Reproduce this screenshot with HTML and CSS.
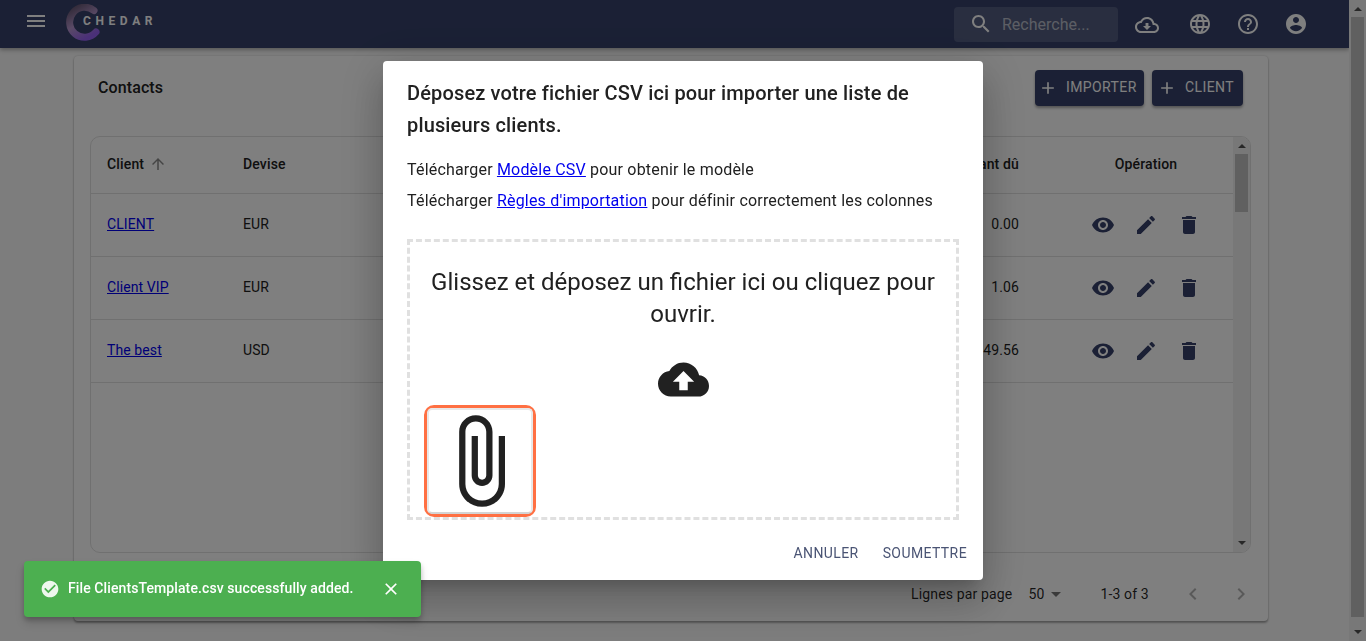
FILE: index.html
```html
<!DOCTYPE html>
<html lang="fr">
<head>
    <meta charset="UTF-8">
    <meta name="viewport" content="width=device-width, initial-scale=1.0">
    <title>Contacts - Chedar</title>
    <link rel="stylesheet" href="styles.css">
</head>
<body>
    <!-- icones material -->
    <svg class="sprites" xmlns="http://www.w3.org/2000/svg">
        <symbol id="i-menu" viewBox="0 0 24 24"><path d="M3 18h18v-2H3v2zm0-5h18v-2H3v2zm0-7v2h18V6H3z"/></symbol>
        <symbol id="i-search" viewBox="0 0 24 24"><path d="M15.5 14h-.79l-.28-.27C15.41 12.59 16 11.11 16 9.5 16 5.91 13.09 3 9.5 3S3 5.91 3 9.5 5.91 16 9.5 16c1.61 0 3.09-.59 4.23-1.57l.27.28v.79l5 4.99L20.49 19l-4.99-5zm-6 0C7.01 14 5 11.99 5 9.5S7.01 5 9.5 5 14 7.01 14 9.5 11.99 14 9.5 14z"/></symbol>
        <symbol id="i-cloud-down" viewBox="0 0 24 24"><path d="M19.35 10.04C18.67 6.59 15.64 4 12 4 9.11 4 6.6 5.64 5.35 8.04 2.34 8.36 0 10.91 0 14c0 3.31 2.69 6 6 6h13c2.76 0 5-2.24 5-5 0-2.64-2.05-4.78-4.65-4.96zM19 18H6c-2.21 0-4-1.79-4-4 0-2.05 1.53-3.76 3.56-3.97l1.07-.11.5-.95C8.08 7.14 9.94 6 12 6c2.62 0 4.88 1.86 5.39 4.43l.3 1.5 1.53.11c1.56.1 2.78 1.41 2.78 2.96 0 1.65-1.35 3-3 3zm-5.55-8h-2.9v3H8l4 4 4-4h-2.55z"/></symbol>
        <symbol id="i-language" viewBox="0 0 24 24"><path d="M11.99 2C6.47 2 2 6.48 2 12s4.47 10 9.99 10C17.52 22 22 17.52 22 12S17.52 2 11.99 2zm6.93 6h-2.95c-.32-1.25-.78-2.45-1.38-3.56 1.84.63 3.37 1.91 4.33 3.56zM12 4.04c.83 1.2 1.48 2.53 1.91 3.96h-3.82c.43-1.43 1.08-2.76 1.91-3.96zM4.26 14C4.1 13.36 4 12.69 4 12s.1-1.36.26-2h3.38c-.08.66-.14 1.32-.14 2 0 .68.06 1.34.14 2H4.26zm.82 2h2.95c.32 1.25.78 2.45 1.38 3.56-1.84-.63-3.37-1.9-4.33-3.56zm2.95-8H5.08c.96-1.66 2.49-2.93 4.33-3.56C8.81 5.55 8.35 6.75 8.03 8zM12 19.96c-.83-1.2-1.48-2.53-1.91-3.96h3.82c-.43 1.43-1.08 2.76-1.91 3.96zM14.34 14H9.66c-.09-.66-.16-1.32-.16-2 0-.68.07-1.35.16-2h4.68c.09.65.16 1.32.16 2 0 .68-.07 1.34-.16 2zm.25 5.56c.6-1.11 1.06-2.31 1.38-3.56h2.95c-.96 1.65-2.49 2.93-4.33 3.56zM16.36 14c.08-.66.14-1.32.14-2 0-.68-.06-1.34-.14-2h3.38c.16.64.26 1.31.26 2s-.1 1.36-.26 2h-3.38z"/></symbol>
        <symbol id="i-help" viewBox="0 0 24 24"><path d="M11 18h2v-2h-2v2zm1-16C6.48 2 2 6.48 2 12s4.48 10 10 10 10-4.48 10-10S17.52 2 12 2zm0 18c-4.41 0-8-3.59-8-8s3.59-8 8-8 8 3.59 8 8-3.59 8-8 8zm0-14c-2.21 0-4 1.79-4 4h2c0-1.1.9-2 2-2s2 .9 2 2c0 2-3 1.75-3 5h2c0-2.25 3-2.5 3-5 0-2.21-1.79-4-4-4z"/></symbol>
        <symbol id="i-account" viewBox="0 0 24 24"><path d="M12 2C6.48 2 2 6.48 2 12s4.48 10 10 10 10-4.48 10-10S17.52 2 12 2zm0 3c1.66 0 3 1.34 3 3s-1.34 3-3 3-3-1.34-3-3 1.34-3 3-3zm0 14.2c-2.5 0-4.71-1.28-6-3.22.03-1.99 4-3.08 6-3.08 1.99 0 5.97 1.09 6 3.08-1.29 1.94-3.5 3.22-6 3.22z"/></symbol>
        <symbol id="i-add" viewBox="0 0 24 24"><path d="M19 13h-6v6h-2v-6H5v-2h6V5h2v6h6v2z"/></symbol>
        <symbol id="i-up" viewBox="0 0 24 24"><path d="M4 12l1.41 1.41L11 7.83V20h2V7.83l5.58 5.59L20 12l-8-8-8 8z"/></symbol>
        <symbol id="i-eye" viewBox="0 0 24 24"><path d="M12 4.5C7 4.5 2.73 7.61 1 12c1.73 4.39 6 7.5 11 7.5s9.27-3.11 11-7.5c-1.73-4.39-6-7.5-11-7.5zM12 17c-2.76 0-5-2.24-5-5s2.24-5 5-5 5 2.24 5 5-2.24 5-5 5zm0-8c-1.66 0-3 1.34-3 3s1.34 3 3 3 3-1.34 3-3-1.34-3-3-3z"/></symbol>
        <symbol id="i-edit" viewBox="0 0 24 24"><path d="M3 17.25V21h3.75L17.81 9.94l-3.75-3.75L3 17.25zM20.71 7.04c.39-.39.39-1.02 0-1.41l-2.34-2.34c-.39-.39-1.02-.39-1.41 0l-1.83 1.83 3.75 3.75 1.83-1.83z"/></symbol>
        <symbol id="i-delete" viewBox="0 0 24 24"><path d="M6 19c0 1.1.9 2 2 2h8c1.1 0 2-.9 2-2V7H6v12zM19 4h-3.5l-1-1h-5l-1 1H5v2h14V4z"/></symbol>
        <symbol id="i-drop" viewBox="0 0 24 24"><path d="M7 10l5 5 5-5z"/></symbol>
        <symbol id="i-prev" viewBox="0 0 24 24"><path d="M15.41 7.41L14 6l-6 6 6 6 1.41-1.41L10.83 12z"/></symbol>
        <symbol id="i-next" viewBox="0 0 24 24"><path d="M10 6L8.59 7.41 13.17 12l-4.58 4.59L10 18l6-6z"/></symbol>
        <symbol id="i-upload" viewBox="0 0 24 24"><path d="M19.35 10.04C18.67 6.59 15.64 4 12 4 9.11 4 6.6 5.64 5.35 8.04 2.34 8.36 0 10.91 0 14c0 3.31 2.69 6 6 6h13c2.76 0 5-2.24 5-5 0-2.64-2.05-4.78-4.65-4.96zM14 13v4h-4v-4H7l5-5 5 5h-3z"/></symbol>
        <symbol id="i-clip" viewBox="0 0 24 24"><path d="M16.5 6v11.5c0 2.21-1.79 4-4 4s-4-1.79-4-4V5c0-1.38 1.12-2.5 2.5-2.5s2.5 1.12 2.5 2.5v10.5c0 .55-.45 1-1 1s-1-.45-1-1V6H10v9.5c0 1.38 1.12 2.5 2.5 2.5s2.5-1.12 2.5-2.5V5c0-2.21-1.79-4-4-4S7 2.79 7 5v12.5c0 3.04 2.46 5.5 5.5 5.5s5.5-2.46 5.5-5.5V6h-1.5z"/></symbol>
        <symbol id="i-check" viewBox="0 0 24 24"><path d="M12 2C6.48 2 2 6.48 2 12s4.48 10 10 10 10-4.48 10-10S17.52 2 12 2zm-2 15l-5-5 1.41-1.41L10 14.17l7.59-7.59L19 8l-9 9z"/></symbol>
        <symbol id="i-close" viewBox="0 0 24 24"><path d="M19 6.41L17.59 5 12 10.59 6.41 5 5 6.41 10.59 12 5 17.59 6.41 19 12 13.41 17.59 19 19 17.59 13.41 12z"/></symbol>
    </svg>

    <div class="app">
        <div class="main">
            <header class="topbar">
                <svg class="icon menu-icon"><use href="#i-menu"/></svg>
                <div class="logo">
                    <svg class="logo-ring" viewBox="0 0 38 38">
                        <defs>
                            <linearGradient id="ringGrad" x1="0.2" y1="0" x2="0.7" y2="1">
                                <stop offset="0" stop-color="#6a5a78"/>
                                <stop offset="0.5" stop-color="#b494cc"/>
                                <stop offset="1" stop-color="#9560f0"/>
                            </linearGradient>
                        </defs>
                        <path d="M30 6.5A15 15 0 1 0 32 28" fill="none" stroke="url(#ringGrad)" stroke-width="7" stroke-linecap="round"/>
                    </svg>
                    <span class="logo-text">CHEDAR</span>
                </div>
                <div class="topbar-right">
                    <div class="search">
                        <svg class="icon"><use href="#i-search"/></svg>
                        <span class="search-text">Recherche...</span>
                    </div>
                    <svg class="icon top-icon cloud-icon"><use href="#i-cloud-down"/></svg>
                    <svg class="icon top-icon globe-icon"><use href="#i-language"/></svg>
                    <svg class="icon top-icon"><use href="#i-help"/></svg>
                    <svg class="icon top-icon"><use href="#i-account"/></svg>
                </div>
            </header>

            <section class="card">
                <div class="card-head">
                    <h2 class="card-title">Contacts</h2>
                    <div class="card-actions">
                        <button class="btn-dark btn-import"><svg class="icon"><use href="#i-add"/></svg>Importer</button>
                        <button class="btn-dark btn-client"><svg class="icon"><use href="#i-add"/></svg>Client</button>
                    </div>
                </div>

                <div class="table-box">
                    <div class="table-rows">
                        <div class="row row-head">
                            <div class="cell-client">Client <svg class="icon sort-icon"><use href="#i-up"/></svg></div>
                            <div>Devise</div>
                            <div class="cell-amount">Montant dû</div>
                            <div class="cell-ops">Opération</div>
                        </div>
                        <div class="row">
                            <div><a href="#">CLIENT</a></div>
                            <div>EUR</div>
                            <div class="cell-amount">0.00</div>
                            <div class="cell-ops">
                                <svg class="icon"><use href="#i-eye"/></svg>
                                <svg class="icon"><use href="#i-edit"/></svg>
                                <svg class="icon"><use href="#i-delete"/></svg>
                            </div>
                        </div>
                        <div class="row">
                            <div><a href="#">Client VIP</a></div>
                            <div>EUR</div>
                            <div class="cell-amount">1.06</div>
                            <div class="cell-ops">
                                <svg class="icon"><use href="#i-eye"/></svg>
                                <svg class="icon"><use href="#i-edit"/></svg>
                                <svg class="icon"><use href="#i-delete"/></svg>
                            </div>
                        </div>
                        <div class="row">
                            <div><a href="#">The best</a></div>
                            <div>USD</div>
                            <div class="cell-amount">49.56</div>
                            <div class="cell-ops">
                                <svg class="icon"><use href="#i-eye"/></svg>
                                <svg class="icon"><use href="#i-edit"/></svg>
                                <svg class="icon"><use href="#i-delete"/></svg>
                            </div>
                        </div>
                    </div>
                    <div class="scrollbar">
                        <span class="arrow-up"></span>
                        <span class="thumb thumb-table"></span>
                        <span class="spacer"></span>
                        <span class="arrow-down"></span>
                    </div>
                </div>

                <div class="pagination">
                    <span>Lignes par page</span>
                    <span class="page-size">50 <svg class="icon"><use href="#i-drop"/></svg></span>
                    <span class="page-count">1-3 of 3</span>
                    <svg class="icon page-nav page-prev"><use href="#i-prev"/></svg>
                    <svg class="icon page-nav"><use href="#i-next"/></svg>
                </div>
            </section>
        </div>

        <div class="scrollbar scrollbar-page">
            <span class="arrow-up"></span>
            <span class="thumb thumb-page"></span>
            <span class="arrow-down"></span>
        </div>
    </div>

    <!-- fond du dialogue -->
    <div class="backdrop">
        <div class="dialog">
            <h2 class="dialog-title">Déposez votre fichier CSV ici pour importer une liste de plusieurs clients.</h2>
            <div class="dialog-content">
                <p class="dialog-line">Télécharger <a href="#">Modèle CSV</a> pour obtenir le modèle</p>
                <p class="dialog-line">Télécharger <a href="#">Règles d'importation</a> pour définir correctement les colonnes</p>
                <div class="dropzone">
                    <p class="dropzone-text">Glissez et déposez un fichier ici ou cliquez pour ouvrir.</p>
                    <svg class="upload-icon"><use href="#i-upload"/></svg>
                    <div class="thumb-file">
                        <div class="thumb-inner">
                            <svg class="clip-icon"><use href="#i-clip"/></svg>
                        </div>
                    </div>
                </div>
            </div>
            <div class="dialog-actions">
                <button class="btn-text">Annuler</button>
                <button class="btn-text">Soumettre</button>
            </div>
        </div>
    </div>

    <div class="snackbar">
        <svg class="icon snack-check"><use href="#i-check"/></svg>
        <span class="snack-text">File ClientsTemplate.csv successfully added.</span>
        <svg class="icon snack-close"><use href="#i-close"/></svg>
    </div>
</body>
</html>
```

FILE: styles.css
```css
* {
    box-sizing: border-box;
}
html, body {
    height: 100%;
}
body {
    margin: 0;
    overflow: hidden;
    font-family: Roboto, "Liberation Sans", sans-serif;
    font-size: 14px;
    color: #212121;
    background-color: #fafafa;
}
.sprites {
    display: none;
}
.icon {
    display: block;
    width: 24px;
    height: 24px;
    fill: currentColor;
    flex: none;
}
.app {
    display: flex;
    height: 100%;
}
.main {
    flex: 1;
    min-width: 0;
}

/* barre du haut */
.topbar {
    display: flex;
    align-items: center;
    height: 48px;
    padding: 0 41px 0 24px;
    background-color: #36416a;
    color: #fff;
    box-shadow: 0 2px 4px rgba(0,0,0,0.3);
}
.menu-icon {
    margin-top: -6px;
}
.logo {
    display: flex;
    align-items: center;
    margin-left: 16px;
    margin-top: -3px;
}
.logo-ring {
    width: 38px;
    height: 38px;
}
.logo-text {
    margin-left: -19px;
    margin-top: -4px;
    font-size: 12px;
    font-weight: 700;
    letter-spacing: 4.6px;
    color: #fff;
}
.topbar-right {
    display: flex;
    align-items: center;
    margin-left: auto;
}
.search {
    display: flex;
    align-items: center;
    width: 164px;
    height: 35px;
    margin-right: 17px;
    padding-left: 15px;
    border-radius: 4px;
    background-color: rgba(255,255,255,0.15);
}
.search-text {
    margin-left: 9px;
    font-size: 16px;
    color: rgba(255,255,255,0.6);
}
.top-icon {
    margin-left: 24px;
}
.cloud-icon {
    margin-left: 0;
    margin-top: 2px;
}
.globe-icon {
    margin-left: 29px;
}

/* carte contacts */
.card {
    display: flex;
    flex-direction: column;
    height: 565px;
    margin: 8px 81px 0 74px;
    padding: 14px 17px 0 16px;
    border-radius: 4px;
    background-color: #fff;
    box-shadow: 0 2px 2px rgba(0,0,0,0.3), 0 0 2px rgba(0,0,0,0.2);
}
.card-head {
    display: flex;
    align-items: center;
    justify-content: space-between;
    height: 36px;
    margin-bottom: 30px;
    padding-right: 8px;
}
.card-title {
    margin: 0 0 0 8px;
    padding-bottom: 2px;
    font-size: 16px;
    font-weight: 500;
    letter-spacing: 0.1px;
}
.card-actions {
    display: flex;
    gap: 8px;
}
.btn-dark {
    display: flex;
    align-items: center;
    height: 36px;
    padding: 0 0 2px;
    border: none;
    border-radius: 4px;
    background-color: #36416a;
    color: #fff;
    font-family: inherit;
    font-size: 14px;
    letter-spacing: 0.4px;
    text-transform: uppercase;
    box-shadow: 0 2px 3px rgba(0,0,0,0.35);
}
.btn-dark .icon {
    width: 20px;
    height: 20px;
    margin-top: 2px;
}
.btn-import {
    width: 109px;
    padding-left: 3px;
}
.btn-import .icon {
    margin-right: 8px;
}
.btn-client {
    width: 91px;
    padding-left: 5px;
}
.btn-client .icon {
    margin-right: 8px;
}
.table-box {
    display: flex;
    height: 417px;
    border: 1px solid #e0e0e0;
    border-radius: 10px;
    overflow: hidden;
}
.table-rows {
    flex: 1;
    min-width: 0;
}
.row {
    display: grid;
    grid-template-columns: 136px 1fr 200px 174px;
    align-items: center;
    height: 63px;
    padding: 0 0 2px 16px;
    border-bottom: 1px solid #e0e0e0;
    letter-spacing: 0.1px;
}
.row-head {
    height: 57px;
    padding-bottom: 3px;
    font-weight: 500;
    letter-spacing: 0.15px;
}
.cell-client {
    display: flex;
    align-items: center;
    gap: 5px;
}
.sort-icon {
    width: 18px;
    height: 18px;
    color: #8a8a8a;
}
.cell-amount {
    padding-right: 40px;
    text-align: right;
}
.cell-ops {
    display: flex;
    justify-content: center;
    gap: 19px;
    color: #36416a;
}
.cell-ops .icon {
    margin-top: 2px;
}
.row-head .cell-ops {
    color: inherit;
}
a {
    color: #0000ee;
}

/* barres de defilement */
.scrollbar {
    display: flex;
    flex-direction: column;
    align-items: center;
    width: 17px;
    flex: none;
    background-color: #f1f1f1;
}
.thumb {
    width: 13px;
    background-color: #c1c1c1;
}
.thumb-table {
    height: 58px;
    margin-top: 1px;
}
.thumb-page {
    flex: 1;
    margin-top: 1px;
    margin-bottom: 8px;
}
.spacer {
    flex: 1;
}
.arrow-up, .arrow-down {
    width: 0;
    height: 0;
    border-left: 4px solid transparent;
    border-right: 4px solid transparent;
}
.arrow-up {
    margin: 7px 0 5px;
    border-bottom: 4px solid #505050;
}
.arrow-down {
    margin: 5px 0 7px;
    border-top: 4px solid #505050;
}

/* pagination */
.pagination {
    display: flex;
    align-items: center;
    height: 68px;
    padding-top: 14px;
    padding-left: 821px;
    letter-spacing: 0.15px;
    white-space: nowrap;
    color: rgba(0,0,0,0.87);
}
.pagination > span {
    flex: none;
}
.page-size {
    display: flex;
    align-items: center;
    margin-left: 16px;
}
.page-size .icon {
    color: rgba(0,0,0,0.54);
}
.page-count {
    margin-left: 32px;
}
.page-nav {
    color: rgba(0,0,0,0.3);
    margin-left: 24px;
}
.page-prev {
    margin-left: 32px;
}

/* dialogue */
.backdrop {
    position: fixed;
    inset: 0;
    display: flex;
    align-items: center;
    justify-content: center;
    background-color: rgba(0,0,0,0.5);
}
.dialog {
    display: flex;
    flex-direction: column;
    width: 600px;
    height: 519px;
    border-radius: 4px;
    background-color: #fff;
    box-shadow: 0 11px 15px -7px rgba(0,0,0,0.2), 0 24px 38px 3px rgba(0,0,0,0.14), 0 9px 46px 8px rgba(0,0,0,0.12);
}
.dialog-title {
    margin: 0;
    padding: 16px 24px 14px;
    font-size: 20px;
    font-weight: 500;
    line-height: 32px;
    letter-spacing: 0.15px;
}
.dialog-content {
    flex: 1;
    padding: 0 24px 16px;
}
.dialog-line {
    margin: 0 0 1px;
    font-size: 16px;
    line-height: 30px;
    letter-spacing: 0.19px;
}
.dropzone {
    height: 281px;
    margin-top: 23px;
    border: 3px dashed #e0e0e0;
    text-align: center;
}
.dropzone-text {
    margin: 24px 0 0;
    font-size: 24px;
    line-height: 32px;
}
.upload-icon {
    display: block;
    width: 51px;
    height: 51px;
    margin: 24px auto 0;
    fill: #212121;
}
.thumb-file {
    width: 112px;
    height: 112px;
    margin-left: 14px;
    border: 3px solid #ff7043;
    border-radius: 10px;
}
.thumb-inner {
    height: 100%;
    padding: 1px;
    border: 2px solid #e8e8e8;
    border-bottom-color: #d4d4d4;
    border-radius: 5px;
}
.clip-icon {
    display: block;
    width: 100px;
    height: 100px;
    fill: #212121;
}
.dialog-actions {
    display: flex;
    justify-content: flex-end;
    gap: 8px;
    padding: 0 8px 9px;
}
.btn-text {
    height: 36px;
    padding: 5px 8px 7px;
    border: none;
    background: none;
    color: #4a5474;
    font-family: inherit;
    font-size: 14px;
    letter-spacing: 0.4px;
    text-transform: uppercase;
}

/* notification */
.snackbar {
    position: fixed;
    left: 24px;
    bottom: 24px;
    display: flex;
    align-items: center;
    width: 397px;
    height: 56px;
    padding: 0 20px 0 16px;
    border-radius: 4px;
    background-color: #4caf50;
    color: #fff;
    box-shadow: 0 3px 5px rgba(0,0,0,0.2), 0 6px 10px rgba(0,0,0,0.14);
}
.snack-check {
    width: 20px;
    height: 20px;
    opacity: 0.9;
}
.snack-text {
    margin-left: 8px;
    margin-top: -2px;
    font-weight: 500;
    letter-spacing: 0.1px;
}
.snack-close {
    width: 20px;
    height: 20px;
    margin-left: auto;
}
```
